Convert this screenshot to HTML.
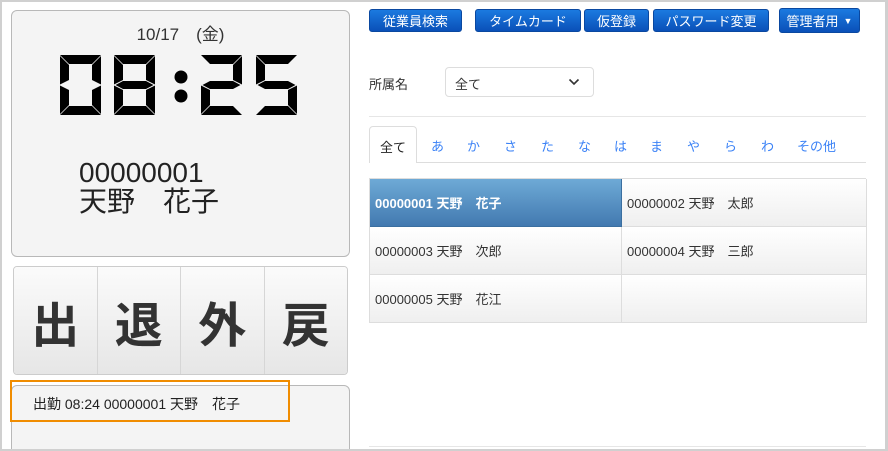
<!DOCTYPE html>
<html style="width:888px;height:451px;overflow:hidden"><head><meta charset="utf-8">
<style>
*{box-sizing:border-box;margin:0;padding:0}
body{width:888px;height:451px;overflow:hidden;background:#fff;font-family:"Liberation Sans","Noto Sans CJK JP",sans-serif;color:#333;position:relative}
.frame{position:absolute;left:0;top:0;width:888px;height:451px;border:2px solid #d0d0d0;border-right-width:3px;z-index:5;pointer-events:none}
.abs{position:absolute}
.clock{left:11px;top:10px;width:339px;height:247px;background:#f4f4f4;border:1px solid #b8b8b8;border-radius:6px}
.keys{left:13px;top:266px;width:335px;height:109px;border:1px solid #ccc;border-radius:4px;display:flex;overflow:hidden}
.keys div{flex:1;border-right:1px solid #d6d6d6;background:linear-gradient(#fbfbfb,#e6e6e6);font-size:48px;font-weight:bold;display:flex;align-items:center;justify-content:center;color:#333}
.keys div:last-child{border-right:none}
.log{left:11px;top:385px;width:339px;height:80px;background:#f4f4f4;border:1px solid #b8b8b8;border-radius:6px}
.orange{left:10px;top:380px;width:280px;height:42px;border:2px solid #f08c00}
.btn{top:9px;height:23px;background:linear-gradient(#1b7ae0,#0a50b8);color:#fff;font-size:13px;border-radius:3px;display:flex;align-items:center;justify-content:center;border:1px solid #0a48a0}
.tab{top:136px;font-size:13px;color:#3b82f6}
.grid{left:369px;top:178px;width:497px;height:145px;border:1px solid #ddd;display:grid;grid-template-columns:252px 245px;grid-template-rows:48px 48px 48px}
.grid div{background:linear-gradient(#fff,#efefef);border-right:1px solid #ddd;border-bottom:1px solid #ddd;font-size:13px;display:flex;align-items:center;padding-left:5px;color:#333}
.grid div.sel{background:linear-gradient(#6eaad6,#4279b0);color:#fff;font-weight:bold;border-color:#3b6fa0}
</style></head><body>
<div class="frame"></div>
<div class="abs clock"></div>
<div class="abs" style="left:11px;top:20px;width:339px;text-align:center;font-size:17px;color:#333">10/17　(金)</div>
<svg class="abs" style="left:0;top:0" width="360" height="130">
<defs>
<g id="sa"><polygon points="0,0 41,0 32,9 9,9"/></g>
<g id="sd"><polygon points="0,60 41,60 32,51 9,51"/></g>
<g id="sf"><polygon points="0,1 9,10 9,25 0,29.5"/></g>
<g id="se"><polygon points="0,30.5 9,35 9,50 0,59"/></g>
<g id="sb"><polygon points="41,1 32,10 32,25 41,29.5"/></g>
<g id="sc"><polygon points="41,30.5 32,35 32,50 41,59"/></g>
<g id="sg"><polygon points="1.5,30 9,26 32,26 39.5,30 32,34 9,34"/></g>
</defs>
<g fill="#000">
<g transform="translate(60,55)"><use href="#sa"/><use href="#sb"/><use href="#sc"/><use href="#sd"/><use href="#se"/><use href="#sf"/></g>
<g transform="translate(114,55)"><use href="#sa"/><use href="#sb"/><use href="#sc"/><use href="#sd"/><use href="#se"/><use href="#sf"/><use href="#sg"/></g>
<circle cx="181" cy="77" r="6.5"/><circle cx="181" cy="96" r="6.5"/>
<g transform="translate(201,55)"><use href="#sa"/><use href="#sb"/><use href="#sg"/><use href="#se"/><use href="#sd"/></g>
<g transform="translate(256,55)"><use href="#sa"/><use href="#sf"/><use href="#sg"/><use href="#sc"/><use href="#sd"/></g>
</g></svg>
<div class="abs" style="left:79px;top:158px;font-size:28px;line-height:29px;color:#222">00000001<br>天野　花子</div>
<div class="abs keys"><div>出</div><div>退</div><div>外</div><div>戻</div></div>
<div class="abs log"></div>
<div class="abs orange"></div>
<div class="abs" style="left:33px;top:394px;font-size:14px;color:#222">出勤 08:24 00000001 天野　花子</div>

<div class="abs btn" style="left:369px;width:93px">従業員検索</div>
<div class="abs btn" style="left:475px;width:106px">タイムカード</div>
<div class="abs btn" style="left:584px;width:65px">仮登録</div>
<div class="abs btn" style="left:653px;width:116px">パスワード変更</div>
<div class="abs btn" style="left:779px;width:81px;top:8px;height:25px">管理者用 <span style="font-size:9px;margin-left:5px">▼</span></div>

<div class="abs" style="left:369px;top:74px;font-size:13px">所属名</div>
<div class="abs" style="left:445px;top:67px;width:149px;height:30px;border:1px solid #ddd;border-radius:4px;font-size:13px;padding:6px 0 0 9px">全て
<svg class="abs" style="left:122px;top:10px" width="12" height="8"><path d="M1.5 1.5 L6 6 L10.5 1.5" stroke="#333" stroke-width="1.6" fill="none"/></svg></div>
<div class="abs" style="left:369px;top:116px;width:497px;border-top:1px solid #e6e6e6"></div>
<div class="abs" style="left:369px;top:162px;width:497px;border-top:1px solid #ddd"></div>
<div class="abs" style="left:369px;top:126px;width:48px;height:37px;border:1px solid #ddd;border-bottom:none;border-radius:4px 4px 0 0;background:#fff;font-size:13px;text-align:center;padding-top:10px;color:#222">全て</div>
<div class="abs tab" style="left:431px">あ</div>
<div class="abs tab" style="left:467px">か</div>
<div class="abs tab" style="left:504px">さ</div>
<div class="abs tab" style="left:541px">た</div>
<div class="abs tab" style="left:578px">な</div>
<div class="abs tab" style="left:614px">は</div>
<div class="abs tab" style="left:650px">ま</div>
<div class="abs tab" style="left:687px">や</div>
<div class="abs tab" style="left:724px">ら</div>
<div class="abs tab" style="left:761px">わ</div>
<div class="abs tab" style="left:797px">その他</div>

<div class="abs grid">
<div class="sel">00000001 天野　花子</div><div>00000002 天野　太郎</div>
<div>00000003 天野　次郎</div><div>00000004 天野　三郎</div>
<div>00000005 天野　花江</div><div></div>
</div>
<div class="abs" style="left:369px;top:446px;width:497px;border-top:1px solid #e6e6e6"></div>
</body></html>
